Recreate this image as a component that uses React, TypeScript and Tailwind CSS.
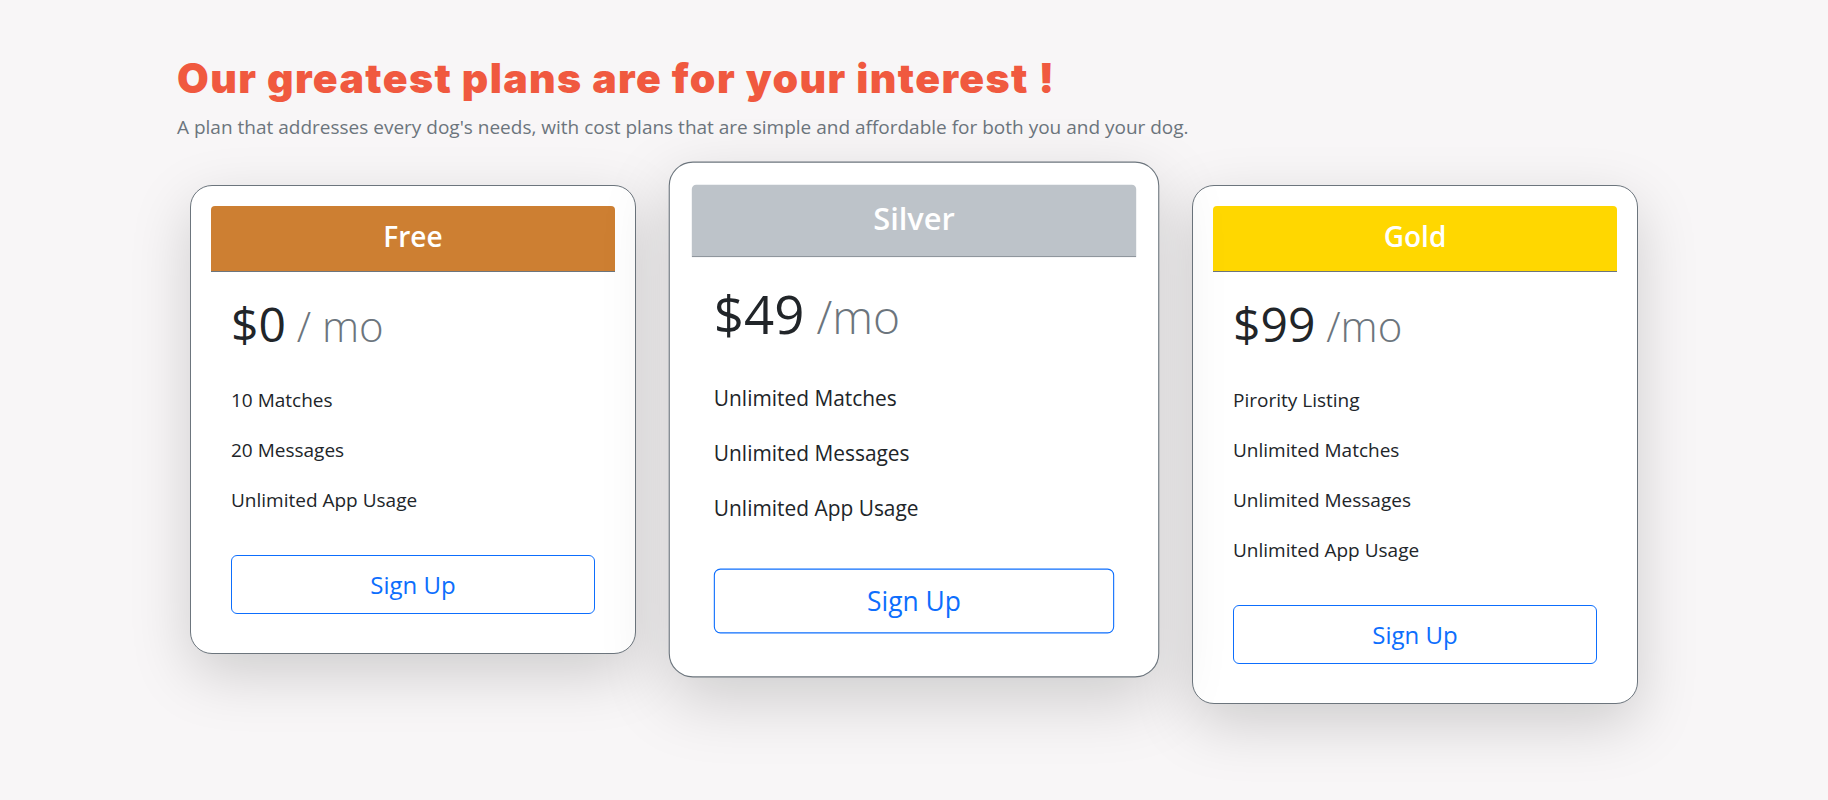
import React from 'react';

type Plan = {
  name: string;
  price: string;
  per: string;
  color: string;
  features: string[];
  featured?: boolean;
};

const plans: Plan[] = [
  { name: 'Free', price: '$0', per: ' / mo', color: 'bg-[#cd7f32]', features: ['10 Matches', '20 Messages', 'Unlimited App Usage'] },
  { name: 'Silver', price: '$49', per: ' /mo', color: 'bg-[#bdc3c9]', features: ['Unlimited Matches', 'Unlimited Messages', 'Unlimited App Usage'], featured: true },
  { name: 'Gold', price: '$99', per: ' /mo', color: 'bg-[#ffd700]', features: ['Pirority Listing', 'Unlimited Matches', 'Unlimited Messages', 'Unlimited App Usage'] },
];

const PlanCard: React.FC<{ plan: Plan }> = ({ plan }) => (
  <div
    className={`w-[446px] shrink-0 bg-white border border-[#6c757d] rounded-[22px] p-[20px] shadow-[0_20px_60px_rgba(0,0,0,0.17)] ${plan.featured ? 'scale-110' : ''}`}
  >
    <div className={`${plan.color} h-[66px] rounded-t-[4px] border-b border-[#6c757d] flex items-center justify-center pb-[6px]`}>
      <h4 className="text-white text-[28px] font-semibold leading-none">{plan.name}</h4>
    </div>
    <div className="px-[20px] pb-[19px]">
      <h1 className="mt-[22px] text-[48px] leading-[60px] text-[#212529] font-medium">
        {plan.price}
        <small className="text-[42px] font-light text-[#6c757d]">{plan.per}</small>
      </h1>
      <ul className="mt-[19px] text-[19px] leading-[50px] text-[#212529]">
        {plan.features.map((f) => (
          <li key={f}>{f}</li>
        ))}
      </ul>
      <button className="mt-[30px] w-full h-[59px] border border-[#0d6efd] rounded-[6px] text-[#0d6efd] text-[24px] bg-white">
        Sign Up
      </button>
    </div>
  </div>
);

export default function App() {
  return (
    <div className="min-h-screen bg-[#f8f6f7] pt-[53px] font-['Open_Sans',sans-serif]">
      <div className="pl-[177px]">
        <h2 className="font-['Inter',sans-serif] font-black text-[41px] leading-[50px] text-[#f0593f] tracking-[1.4px]">
          Our greatest plans are for your interest !
        </h2>
        <p className="mt-[10px] text-[19px] leading-[28px] text-[#6c757d]">
          A plan that addresses every dog's needs, with cost plans that are simple and affordable for both you and your dog.
        </p>
      </div>
      <div className="mt-[44px] flex justify-center items-start gap-[55px]">
        {plans.map((p) => (
          <PlanCard key={p.name} plan={p} />
        ))}
      </div>
    </div>
  );
}
